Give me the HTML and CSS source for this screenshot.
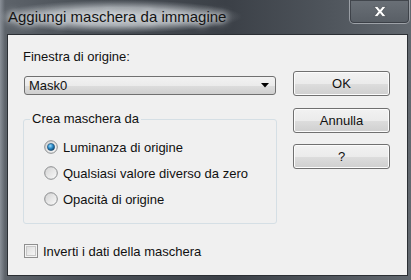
FILE: index.html
```html
<!DOCTYPE html>
<html lang="it">
<head>
    <meta charset="UTF-8">
    <title>Aggiungi maschera da immagine</title>
    <link rel="stylesheet" href="styles.css">
</head>
<body>

<div class="window">
    <div class="titlebar">
        <span class="title">Aggiungi maschera da immagine</span>
        <div class="close-btn">
            <svg width="14" height="11" viewBox="0 0 14 11">
                <path d="M1 0.5 L4.5 0.5 L7 3.6 L9.5 0.5 L13 0.5 L8.9 5.5 L13 10.5 L9.5 10.5 L7 7.4 L4.5 10.5 L1 10.5 L5.1 5.5 Z" fill="#ffffff" stroke="#3a3f45" stroke-width="0.6"/>
            </svg>
        </div>
    </div>

    <div class="client">
        <div class="left-col">
            <label class="field-label">Finestra di origine:</label>
            <div class="combo">
                <span>Mask0</span>
                <svg class="combo-arrow" width="8" height="5" viewBox="0 0 8 5">
                    <path d="M0 0 L8 0 L4 4.5 Z" fill="#000"/>
                </svg>
            </div>

            <fieldset class="group">
                <legend>Crea maschera da</legend>
                <div class="radio-row">
                    <svg class="radio" width="14" height="14" viewBox="0 0 14 14">
                        <defs>
                            <linearGradient id="rbg" x1="0" y1="0" x2="1" y2="1">
                                <stop offset="0" stop-color="#d2d2d2"/>
                                <stop offset="1" stop-color="#fbfbfb"/>
                            </linearGradient>
                            <radialGradient id="dot" cx="0.4" cy="0.35" r="0.7">
                                <stop offset="0" stop-color="#9fdcfb"/>
                                <stop offset="0.5" stop-color="#2a8ac8"/>
                                <stop offset="1" stop-color="#0b3f66"/>
                            </radialGradient>
                        </defs>
                        <circle cx="7" cy="7" r="6.3" fill="url(#rbg)" stroke="#8a8c8e" stroke-width="1"/>
                        <circle cx="7" cy="7" r="3.6" fill="url(#dot)" stroke="#1b4a6e" stroke-width="0.6"/>
                    </svg>
                    <span>Luminanza di origine</span>
                </div>
                <div class="radio-row">
                    <svg class="radio" width="14" height="14" viewBox="0 0 14 14">
                        <circle cx="7" cy="7" r="6.3" fill="url(#rbg)" stroke="#8a8c8e" stroke-width="1"/>
                    </svg>
                    <span>Qualsiasi valore diverso da zero</span>
                </div>
                <div class="radio-row">
                    <svg class="radio" width="14" height="14" viewBox="0 0 14 14">
                        <circle cx="7" cy="7" r="6.3" fill="url(#rbg)" stroke="#8a8c8e" stroke-width="1"/>
                    </svg>
                    <span>Opacità di origine</span>
                </div>
            </fieldset>

            <div class="check-row">
                <span class="checkbox"></span>
                <span>Inverti i dati della maschera</span>
            </div>
        </div>

        <div class="right-col">
            <button class="btn btn-ok">OK</button>
            <button class="btn btn-cancel">Annulla</button>
            <button class="btn btn-help">?</button>
        </div>
    </div>
</div>

</body>
</html>
```

FILE: styles.css
```css
body {
    margin: 0;
    font-family: "Liberation Sans", Arial, sans-serif;
    background: #5e646b;
}
.window {
    width: 411px;
    height: 280px;
    overflow: hidden;
    background: linear-gradient(90deg, #8a9098 0px, #5d636a 5px, #4b5158 20%, #3b4047 55%, #4f555c 80%, #62686f 100%);
}
.titlebar {
    height: 34px;
    display: flex;
    justify-content: space-between;
    align-items: flex-start;
}
.title {
    padding: 0 16px 0 8px;
    margin-left: -4px;
    padding-left: 12px;
    line-height: 33px;
    font-size: 15px;
    color: #141414;
    background: radial-gradient(closest-side, rgba(220, 224, 228, 0.8) 0%, rgba(205, 210, 215, 0.65) 55%, rgba(170, 176, 182, 0.25) 85%, rgba(150, 156, 163, 0) 100%);
    text-shadow: 0 0 6px #e9ecef, 0 0 10px #e3e7ea;
}
.close-btn {
    width: 59px;
    height: 23px;
    margin-right: 1px;
    border: 1px solid rgba(200, 205, 210, 0.55);
    border-top: none;
    border-radius: 0 0 5px 5px;
    background: linear-gradient(180deg, #6a7077, #585e65);
    box-shadow: inset 0 0 0 1px rgba(40, 44, 50, 0.6);
    display: flex;
    justify-content: center;
    align-items: center;
}
.client {
    box-sizing: border-box;
    margin-left: 7px;
    width: 401px;
    height: 242px;
    border: 1px solid #2b2f34;
    background: #f0f0f0;
    display: flex;
    padding: 14px 0 0 15px;
    font-size: 13px;
    color: #111;
}
.left-col {
    width: 254px;
    display: flex;
    flex-direction: column;
}
.field-label {
    line-height: 16px;
}
.combo {
    box-sizing: border-box;
    margin: 11px 0 0 1px;
    width: 252px;
    height: 19px;
    border: 1px solid #707070;
    border-radius: 3px;
    background: linear-gradient(180deg, #f2f2f2 0%, #ebebeb 50%, #dddddd 51%, #cfcfcf 100%);
    display: flex;
    align-items: center;
    justify-content: space-between;
    padding: 0 6px 0 4px;
    line-height: 16px;
}
.combo-arrow {
    display: block;
}
.group {
    margin: 16px 0 0 0;
    padding: 0 0 11px 6px;
    width: 254px;
    box-sizing: border-box;
    border: 1px solid #d5dfe5;
    border-radius: 3px;
    min-width: 0;
}
.group legend {
    padding: 0 2px;
    line-height: 16px;
}
.radio-row {
    display: flex;
    align-items: center;
    gap: 5px;
    height: 26px;
    margin-left: 14px;
}
.radio-row:first-of-type {
    margin-top: 7px;
}
.radio {
    display: block;
}
.check-row {
    display: flex;
    align-items: center;
    gap: 5px;
    margin-top: 19px;
    margin-left: 1px;
    height: 16px;
}
.checkbox {
    box-sizing: border-box;
    width: 14px;
    height: 14px;
    border: 1px solid #8f8f8f;
    background: linear-gradient(135deg, #d8d8d8, #fbfbfb);
    box-shadow: inset 0 0 0 1px #f4f4f4, inset 0 0 0 2px #c9c9c9;
}
.right-col {
    margin-left: 16px;
    padding-top: 22px;
    display: flex;
    flex-direction: column;
}
.btn {
    box-sizing: border-box;
    width: 97px;
    height: 25px;
    padding: 0;
    border: 1px solid #707070;
    border-radius: 3px;
    background: linear-gradient(180deg, #f2f2f2 0%, #ebebeb 50%, #dddddd 51%, #cfcfcf 100%);
    box-shadow: inset 0 0 0 1px #fcfcfc;
    font-family: "Liberation Sans", Arial, sans-serif;
    font-size: 13px;
    color: #111;
}
.btn-cancel {
    margin-top: 12px;
}
.btn-help {
    margin-top: 11px;
}
```
